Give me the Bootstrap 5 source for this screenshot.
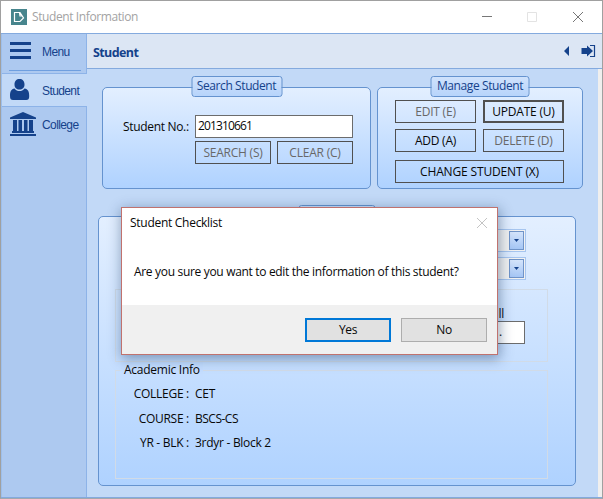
<!DOCTYPE html>
<html lang="en">
<head>
<meta charset="utf-8">
<title>Student Information</title>
<link rel="stylesheet" href="https://cdn.jsdelivr.net/npm/bootstrap@5.3.0/dist/css/bootstrap.min.css">
<style>
body{width:603px;height:499px;overflow:hidden;font:12px/16px "Open Sans","Noto Sans",sans-serif;color:#080808;letter-spacing:-.28px;background:#fff}
.app-window{width:603px;height:499px;border:1px solid #a0a0a0;border-bottom-color:#a3a8ae}
.titlebar{height:32px;color:#a3a3a3;padding:0 19px 0 10px}
.titlebar .caption{margin-left:5px;letter-spacing:-.4px}
.work{height:465px;border-top:1px solid #84aade;border-bottom:1px solid #84aade}
.side{width:86px;background:#adc9f0;border-right:1px solid #8db3e8;border-left:1px solid #9dbfec;color:#15428b;font:12px/16px "Liberation Sans",Arial,sans-serif;letter-spacing:-.6px}
.side-item{height:34px;padding-left:7px;padding-top:1px}
.side-item svg{width:27px;height:27px;margin-right:6px;flex:none}
.side-menu{height:39px;padding:0 5px 0 7px}
.side-menu>div{height:37px;border-bottom:1px solid #6f9fdf}
.side-menu svg{width:27px;height:27px;margin-right:6px}
.side-item.active{width:86px;background:#c2d9f7;border-top:1px solid #8db3e8;border-bottom:1px solid #8db3e8}
.headbar{height:35px;background:#dce6f4;border-bottom:1px solid #84aade;color:#15428b;padding:0 6px 0 6px}
.headbar b{font-size:12.5px;letter-spacing:-.6px;padding-top:3px}
.canvas{background:#c2d9f7}
.scroll-strip{width:4px;background:#f0efee}
.panel{border:1px solid #6593cf;border-radius:5px;background:linear-gradient(#e3efff,#afd2ff);position:relative}
.panel-title{position:absolute;top:-12px;height:21px;left:50%;transform:translateX(-50%);border:1px solid #6593cf;border-radius:3px;background:linear-gradient(#cfe2fc,#b7d4fb);color:#15428b;white-space:nowrap;text-align:center;line-height:18px}
.upper{padding:18px 0 0 15px;gap:6px}
.p-search{width:269px;height:102px;padding:27px 0 0 20px}
.p-manage{width:206px;height:102px;padding:12px 0 0 17px}
.p-info{width:478px;height:270px;margin:27px 0 0 11px;padding:12px 26px 5px 16px}
.field{height:23px;border:1px solid #6c6c6c;background:#fff;padding:1px 2px;line-height:18px;letter-spacing:-.86px}
.cmd{height:23px;border:1px solid #505050;color:#080808;line-height:21px;text-align:center;white-space:nowrap;background:transparent;padding:0;font-size:12px;border-radius:0;letter-spacing:-.22px}
.cmd.off{color:#686868}
.cmd.focus{border-width:2px;line-height:19px}
.w-sm{width:76px}
.w-md{width:81px}
.w-lg{width:169px;letter-spacing:-.15px}
.w-search{width:91px;letter-spacing:-.41px}
.w-manage{width:99px;letter-spacing:-.4px}
.w-info{width:77px}
.lab{width:72px;line-height:23px;white-space:nowrap;letter-spacing:-.32px}
.s-in{width:158px}
.s-pair{margin:2px 0 0 72px;gap:6px}
.s-row{height:24px}
.s-row+.s-pair{margin-top:2px}
.m-pair{gap:7px}
.m-pair+.m-pair{margin-top:6px}
.m-last{margin-top:8px}
.combos{gap:5px;padding-right:23px}
.combo{width:150px;height:23px;border:1px solid #a6c5ef;background:#f1f1f1;padding:1px}
.combo span{width:15px;border:1px solid #7094c8;background:linear-gradient(#d4e4fb,#a5c6f5)}
.inner{border:1px solid #d1dbe7;width:433px}
.inner-1{height:73px;margin-top:9px;padding:16px 22px 0 0}
.inner-2{height:109px;margin-top:8px}
.inner-2 .cap{margin:-9px 0 0 5px;padding:0 3px;background:#c4ddff;width:82px;height:16px;letter-spacing:-.25px}
.ll{margin-right:21px;line-height:15px}
.dot{width:60px;padding-left:33px}
.lines{padding-top:8px}
.line{height:24.5px}
.line .k{width:73px;text-align:right}
.line .v{margin-left:6px}
.line .course{letter-spacing:-.5px}
.msg{position:absolute;left:121px;top:207px;width:377px;height:148px;border:1px solid #c0726e;background:#fff;box-shadow:1px 3px 12px 1px rgba(20,50,90,.42);z-index:5}
.msg-head{height:30px;padding:0 9px 0 8px}
.msg-body{height:67px;padding:26px 0 0 12px;white-space:nowrap;letter-spacing:-.32px}
.msg-foot{background:#f0f0f0;height:49px;gap:10px;padding:0 10px}
.dlg{width:86px;height:24px;border:1px solid #adadad;background:#e1e1e1;border-radius:0;padding:0;font-size:12px;line-height:21px;color:#080808;letter-spacing:-.4px}
.dlg.primary{border:2px solid #0078d7;line-height:19px}
</style>
<script src="https://cdn.jsdelivr.net/npm/bootstrap@5.3.0/dist/js/bootstrap.bundle.min.js"></script>
</head>
<body>
<div class="app-window d-flex flex-column position-relative">
  <header class="titlebar d-flex align-items-center">
    <svg width="16" height="16" viewBox="0 0 16 16"><path fill="#47858d" d="M0 0h16v16H0z"/><path d="M3.500 3.500v9h5.500l3.500-3.500-3.500-5.500z M8.500 3.500l.5 3.500h2.500" fill="none" stroke="#fff" stroke-width="1.200"/></svg>
    <span class="caption">Student Information</span>
    <svg class="ms-auto" width="102" height="14" viewBox="0 0 102 14" fill="none"><path d="M1 6.500h10" stroke="#777"/><path d="M46.500 2.500h9v9h-9z" stroke="#e3e3e3"/><path d="M92 2l10 10M102 2L92 12" stroke="#777"/></svg>
  </header>
  <div class="work d-flex">
    <nav class="side d-flex flex-column flex-shrink-0">
      <div class="side-menu"><div class="d-flex align-items-center"><svg viewBox="0 0 27 27"><path fill="#15428b" d="M1 3h21v3H1zM1 10h21v3H1zM1 17h21v3H1z"/></svg>Menu</div></div>
      <div class="side-item active d-flex align-items-center"><svg viewBox="0 0 27 27"><path fill="#15428b" d="M5.500 7.500C5.500 4 7.500 2 10.500 2S15.500 4 15.500 7.500 13.500 12.500 10.500 12.500 5.500 11 5.500 7.500zM5.500 11.500c1.500 2 3 2.500 5 2.500s3.500-.5 5-2.500c3.500.5 4.700 3 4.700 7.500 0 3-1 4-3 4H4c-2 0-3-1-3-4 0-4.500 1.200-7 4.500-7.500z"/></svg>Student</div>
      <div class="side-item d-flex align-items-center"><svg viewBox="0 0 27 27"><path fill="#15428b" d="M1 6.500L14 1l13 5.500V8H1zM4 9h4v11H4zM9.500 9H13v11H9.500zM15 9h3.500v11H15zM20 9h4v11h-4zM3 20h22v2H3zM1 23h26v2H1z"/></svg>College</div>
    </nav>
    <section class="flex-grow-1 d-flex flex-column">
      <div class="headbar d-flex align-items-center"><b>Student</b>
        <svg class="ms-auto" width="34" height="14" viewBox="0 0 34 14"><path fill="#15428b" d="M7 2v10L2 7zM19.500 4H25V1.500l6 5.500-6 5.500V10h-5.500z"/><path fill="none" stroke="#15428b" stroke-width="1.200" d="M28 1.500h4.500v11H28"/></svg>
      </div>
      <div class="d-flex flex-grow-1">
        <main class="canvas flex-grow-1">
          <div class="upper d-flex">
            <div class="panel p-search"><div class="panel-title w-search">Search Student</div>
              <div class="d-flex s-row"><label class="lab">Student No.:</label><div class="field s-in">201310661</div></div>
              <div class="d-flex s-pair"><button class="cmd off w-sm">SEARCH (S)</button><button class="cmd off w-sm">CLEAR (C)</button></div>
            </div>
            <div class="panel p-manage"><div class="panel-title w-manage">Manage Student</div>
              <div class="d-flex m-pair"><button class="cmd off w-md">EDIT (E)</button><button class="cmd focus w-md">UPDATE (U)</button></div>
              <div class="d-flex m-pair"><button class="cmd w-md">ADD (A)</button><button class="cmd off w-md">DELETE (D)</button></div>
              <button class="cmd w-lg m-last d-block">CHANGE STUDENT (X)</button>
            </div>
          </div>
          <div class="panel p-info"><div class="panel-title w-info"></div>
            <div class="d-flex flex-column align-items-end combos">
              <div class="combo d-flex justify-content-end"><span class="d-flex align-items-center justify-content-center"><svg width="5" height="3"><path fill="#15428b" d="M0 0h5L2.500 3z"/></svg></span></div>
              <div class="combo d-flex justify-content-end"><span class="d-flex align-items-center justify-content-center"><svg width="5" height="3"><path fill="#15428b" d="M0 0h5L2.500 3z"/></svg></span></div>
            </div>
            <div class="inner inner-1 d-flex flex-column align-items-end"><span class="ll">ll</span><div class="field dot">.</div></div>
            <div class="inner inner-2"><div class="cap">Academic Info</div>
              <div class="lines">
                <div class="line d-flex"><span class="k">COLLEGE :</span><span class="v">CET</span></div>
                <div class="line d-flex"><span class="k">COURSE :</span><span class="v course">BSCS-CS</span></div>
                <div class="line d-flex"><span class="k">YR - BLK :</span><span class="v">3rdyr - Block 2</span></div>
              </div>
            </div>
          </div>
        </main>
        <div class="scroll-strip"></div>
      </div>
    </section>
  </div>
</div>
<div class="msg" role="dialog">
  <div class="msg-head d-flex align-items-center justify-content-between"><span>Student Checklist</span><svg width="12" height="12" viewBox="0 0 12 12"><path d="M1 1l10 10M11 1L1 11" stroke="#c4c4c4" fill="none"/></svg></div>
  <div class="msg-body">Are you sure you want to edit the information of this student?</div>
  <div class="msg-foot d-flex align-items-center justify-content-end"><button class="dlg primary">Yes</button><button class="dlg">No</button></div>
</div>
</body>
</html>
